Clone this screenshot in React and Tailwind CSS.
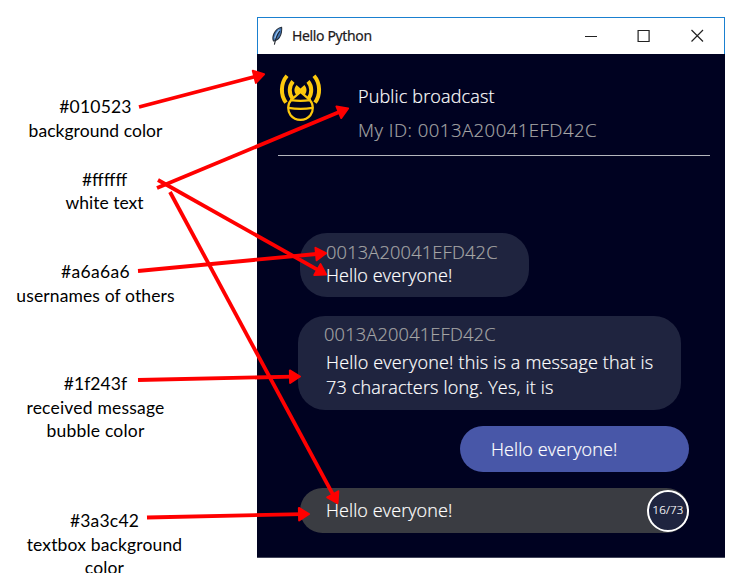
const notes = [
  { lines: ["#010523", "background color"], box: "h-[72.5px] w-[191px]", hex: "tracking-[0.2px]", body: "tracking-[0.05px]" },
  { lines: ["#ffffff", "white text"], box: "h-[92.5px] w-[209px]", hex: "tracking-[0px]", body: "tracking-[0px]" },
  { lines: ["#a6a6a6", "usernames of others"], box: "h-[112px] w-[191px]", hex: "tracking-[0.35px]", body: "tracking-[0.12px]" },
  { lines: ["#1f243f", "received message", "bubble color"], box: "h-[137px] w-[191px]", hex: "tracking-[0.1px]", body: "tracking-[0.2px]" },
  { lines: ["#3a3c42", "textbox background", "color"], box: "h-[71px] w-[209px]", hex: "tracking-[0.2px]", body: "tracking-[0.15px]" },
];

const arrows = [
  [139, 107, 265, 74],
  [157, 188, 349, 108],
  [158, 180, 327, 275],
  [170, 192, 338, 504],
  [138, 271, 327, 253],
  [138, 380, 301, 376.5],
  [147, 517.5, 310, 514],
];

function Arrow({ points: [x1, y1, x2, y2] }) {
  const length = Math.hypot(x2 - x1, y2 - y1);
  const angle = (Math.atan2(y2 - y1, x2 - x1) * 180) / Math.PI;
  return (
    <g transform={`translate(${x1} ${y1}) rotate(${angle})`}>
      <path d={`M0 0H${length - 8}`} stroke="#ff0000" strokeWidth="3.8" />
      <path
        d={`M${length - 1} 0L${length - 11} -6.3V6.3Z`}
        fill="#ff0000"
        stroke="#ff0000"
        strokeWidth="2"
        strokeLinejoin="round"
      />
    </g>
  );
}

function Feather() {
  return (
    <svg className="h-[20px] w-[12px]" viewBox="0 0 12 20" fill="none">
      <path d="M10.6 1.4C7.6 1.6 4.2 4.6 2.8 8C1.8 10.6 1.6 13.2 2.4 14.8L4.6 14.6C7.6 13.2 9.8 9.8 10.4 6.4C10.8 4.2 10.9 2.6 10.6 1.4Z" fill="#3f74b5" stroke="#27303c" strokeWidth="1.1" />
      <path d="M8.4 3.8C6.2 6 4.6 8.8 3.8 12.4" stroke="#8fbdec" strokeWidth="1.5" />
      <path d="M8.8 5C6.4 8.4 4.6 12.4 3.4 18.6" stroke="#20242b" strokeWidth="1.1" />
    </svg>
  );
}

function BeeLogo() {
  return (
    <svg className="h-[50px] w-[46px]" viewBox="278 72 46 50" fill="none" stroke="#fcc80d">
      <path d="M287 75.8C280.4 83.5 280.4 95 286 102.6" strokeWidth="4" />
      <path d="M314 75.8C320.6 83.5 320.6 95 315 102.6" strokeWidth="4" />
      <path d="M293 81.4C288.8 86.4 288.8 93.4 292.4 98.4" strokeWidth="4" />
      <path d="M308 81.4C312.2 86.4 312.2 93.4 308.6 98.4" strokeWidth="4" />
      <path d="M296.6 85L300.5 88.4L304.4 85C307.2 88 307.2 92 304.6 95L300.5 91.4L296.4 95C293.8 92 293.8 88 296.6 85Z" fill="#fcc80d" stroke="none" />
      <path d="M290.6 100.4L300.5 91.9L310.4 100.4" strokeWidth="2.3" />
      <path d="M291 100.2C287.2 104.4 287.4 111.4 290.6 115.2C295.6 121.4 305.4 121.4 310.4 115.2C313.6 111.4 313.8 104.4 310 100.2Q300.5 101.4 291 100.2Z" strokeWidth="2.2" />
      <path d="M288.4 107.8Q300.5 110 312.6 107.8" strokeWidth="2.2" />
    </svg>
  );
}

export default function App() {
  return (
    <div className="relative flex h-[573px] w-[739px] overflow-hidden bg-white">
      <aside className="flex w-[257px] shrink-0 flex-col pt-[14px] font-['Lato','Open_Sans',sans-serif] text-[17.5px] text-black">
        <div className="h-[81px] shrink-0" />
        {notes.map((n) => (
          <div key={n.lines[0]} className={`${n.box} shrink-0 text-center leading-[23.6px]`}>
            <p className={n.hex}>{n.lines[0]}</p>
            {n.lines.slice(1).map((l) => (
              <p key={l} className={n.body}>{l}</p>
            ))}
          </div>
        ))}
      </aside>

      <main className="mt-[17px] flex h-[541px] w-[468px] flex-col bg-[#000221] font-['Open_Sans','Noto_Sans',sans-serif] text-[18px] font-light leading-[24px] text-white [-webkit-text-stroke:0.2px]">
        <header className="flex h-[37px] shrink-0 items-center border border-b-0 border-[#1a80d0] bg-white pl-[13px]">
          <Feather />
          <h1 className="ml-[9px] font-['Noto_Sans','Open_Sans',sans-serif] text-[14px] font-normal tracking-[-0.36px] text-[#221a20]">Hello Python</h1>
          <svg className="ml-auto mr-[20px] h-[14px] w-[120px]" viewBox="0 0 120 14" fill="none" stroke="#222">
            <path d="M1 7.5H13" />
            <path d="M54.1 1.5H65.1V12.5H54.1Z" strokeWidth="1.2" />
            <path d="M107.5 1L119 12.5M119 1L107.5 12.5" strokeWidth="1.2" />
          </svg>
        </header>

        <section className="mx-[21px] mr-[15px] flex h-[102px] shrink-0 border-b border-[#b4b6bd] pt-[18px]">
          <BeeLogo />
          <div className="ml-[34px] pt-[12px]">
            <h2 className="h-[34px] whitespace-nowrap tracking-[0.15px]">Public broadcast</h2>
            <p className="whitespace-nowrap text-[18.5px] tracking-[0.5px] text-[#a6a6a6]">My ID: 0013A20041EFD42C</p>
          </div>
        </section>

        <section className="ml-[43px] mt-[77px] h-[64px] w-[229px] shrink-0 rounded-[27px] bg-[#1f243f] pl-[26px] pt-[8px]">
          <p className="text-[18.2px] leading-[23px] tracking-[0.2px] text-[#a6a6a6]">0013A20041EFD42C</p>
          <p className="leading-[23px] tracking-[0.1px]">Hello everyone!</p>
        </section>

        <section className="ml-[41px] mt-[19px] h-[94px] w-[383px] shrink-0 rounded-[27px] bg-[#1f243f] pl-[26px] pt-[7px]">
          <p className="h-[27px] text-[18.2px] leading-[23px] tracking-[0.2px] text-[#a6a6a6]">0013A20041EFD42C</p>
          <p className="pl-[2px] leading-[25px] tracking-[0.18px]">
            Hello everyone! this is a message that is
            <br />
            73 characters long. Yes, it is
          </p>
        </section>

        <section className="ml-[203px] mt-[16px] flex h-[46px] w-[229px] shrink-0 items-center rounded-full bg-[#4857a8] pb-px pl-[31px] tracking-[0.1px]">
          Hello everyone!
        </section>

        <section className="ml-[43px] mt-[16px] flex h-[45px] w-[389px] shrink-0 items-center justify-between rounded-full bg-[#3a3c42] pl-[26px]">
          <span className="pb-px tracking-[0.1px]">Hello everyone!</span>
          <span className="flex size-[42px] items-center justify-center rounded-full border-2 border-white bg-[#1f243f] pb-px text-[11.5px] tracking-[0.2px]">16/73</span>
        </section>
        <div className="mt-auto h-px bg-[#44475c]" />
      </main>

      <svg className="pointer-events-none absolute inset-0 h-[573px] w-[739px]" viewBox="0 0 739 573">
        {arrows.map((a) => (
          <Arrow key={a.join()} points={a} />
        ))}
      </svg>
    </div>
  );
}
